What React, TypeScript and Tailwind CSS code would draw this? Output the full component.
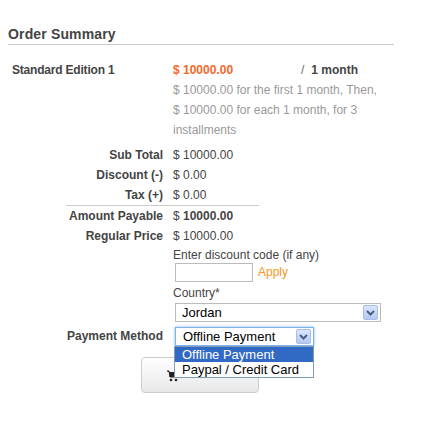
import React from 'react'

const Chevron = () => (
  <span className="absolute right-[2px] top-[1px] flex h-[15px] w-[15px] items-center justify-center rounded-[2px] border border-[#a8bdea] bg-gradient-to-b from-[#dbe6fc] to-[#b4c8f4]">
    <svg width="9" height="6" viewBox="0 0 9 6">
      <path d="M1 1 L4.5 4.5 L8 1" fill="none" stroke="#4b5d80" strokeWidth="2" />
    </svg>
  </span>
)

const Row = ({ label, value, bold }: { label: string; value: string; bold?: boolean }) => (
  <div className="flex leading-5">
    <div className="w-[155px] text-right font-bold">{label}</div>
    <div className={'ml-[10px] ' + (bold ? 'font-bold' : '')}>
      {bold ? (
        <>
          <span className="font-normal">$ </span>10000.00
        </>
      ) : (
        value
      )}
    </div>
  </div>
)

export default function App() {
  return (
    <div className="h-[422px] w-[423px] bg-white px-2 font-['Liberation_Sans',Arial,sans-serif] text-[12px] text-[#444]">
      <h2 className="w-[386px] border-b border-[#cccccc] pb-[2px] pt-[26px] text-[14px] font-bold leading-4 tracking-[0.15px] text-[#444]">
        Order Summary
      </h2>

      <div className="mt-[15px] flex leading-5">
        <div className="w-[155px] pl-[4px] font-bold tracking-[-0.2px]">Standard Edition 1</div>
        <div className="ml-[10px]">
          <div className="flex">
            <span className="w-[128px] font-bold text-[#f2682a]">$ 10000.00</span>
            <span className="text-[#666]">/</span>
            <span className="ml-[7px] font-bold">1 month</span>
          </div>
          <div className="text-[#999]">
            $ 10000.00 for the first 1 month, Then,
            <br />
            $ 10000.00 for each 1 month, for 3
            <br />
            installments
          </div>
        </div>
      </div>

      <div className="mt-[5px]">
        <Row label="Sub Total" value="$ 10000.00" />
        <Row label="Discount (-)" value="$ 0.00" />
        <Row label="Tax (+)" value="$ 0.00" />
        <div className="ml-[58px] h-px w-[193px] bg-[#cccccc]" />
        <Row label="Amount Payable" value="$ 10000.00" bold />
        <Row label="Regular Price" value="$ 10000.00" />
      </div>

      <div className="ml-[165px]">
        <div className="mt-[2px] leading-[15px]">Enter discount code (if any)</div>
        <div className="flex h-[19px] items-center">
          <div className="ml-[2px] h-[19px] w-[78px] border border-[#bbbbbb] bg-white" />
          <span className="ml-[5px] leading-[19px] text-[#f7941d]">Apply</span>
        </div>
        <div className="mt-[4px] leading-[15px]">Country*</div>
        <div className="relative ml-[2px] mt-[2px] h-[19px] w-[206px] border border-[#bbbbbb] bg-white pl-[6px] text-[13px] leading-[17px] text-black">
          Jordan
          <Chevron />
        </div>
      </div>

      <div className="relative z-10 mt-[5px] flex leading-[19px]">
        <div className="w-[155px] text-right font-bold">Payment Method</div>
        <div className="relative ml-[12px] h-[19px] w-[139px] border border-[#7db3ea] bg-white pl-[7px] text-[13px] leading-[17px] text-black shadow-[0_0_3px_rgba(110,170,235,0.8)]">
          Offline Payment
          <Chevron />
          <div className="absolute left-[-2px] top-[18px] w-[140px] border border-[#7f9db9] bg-white text-[13px] leading-[15px] text-black">
            <div className="bg-[#316ac5] pl-[7px] text-white">Offline Payment</div>
            <div className="pl-[7px]">Paypal / Credit Card</div>
          </div>
        </div>
      </div>

      <div className="relative ml-[133px] mt-[11px] h-[36px] w-[118px] rounded-[4px] border border-[#cccccc] bg-gradient-to-b from-white to-[#e8e8e8]">
        <svg className="absolute left-[25px] top-[12px]" width="12" height="12" viewBox="0 0 12 12">
          <path d="M0 1 H2 L3 7 H10 L11 2.5 H2.5" fill="#222" stroke="#222" strokeWidth="1" />
          <rect x="2.5" y="2.5" width="8" height="4.5" fill="#222" />
          <circle cx="4" cy="10" r="1.3" fill="#222" />
          <circle cx="9" cy="10" r="1.3" fill="#222" />
        </svg>
      </div>
    </div>
  )
}
